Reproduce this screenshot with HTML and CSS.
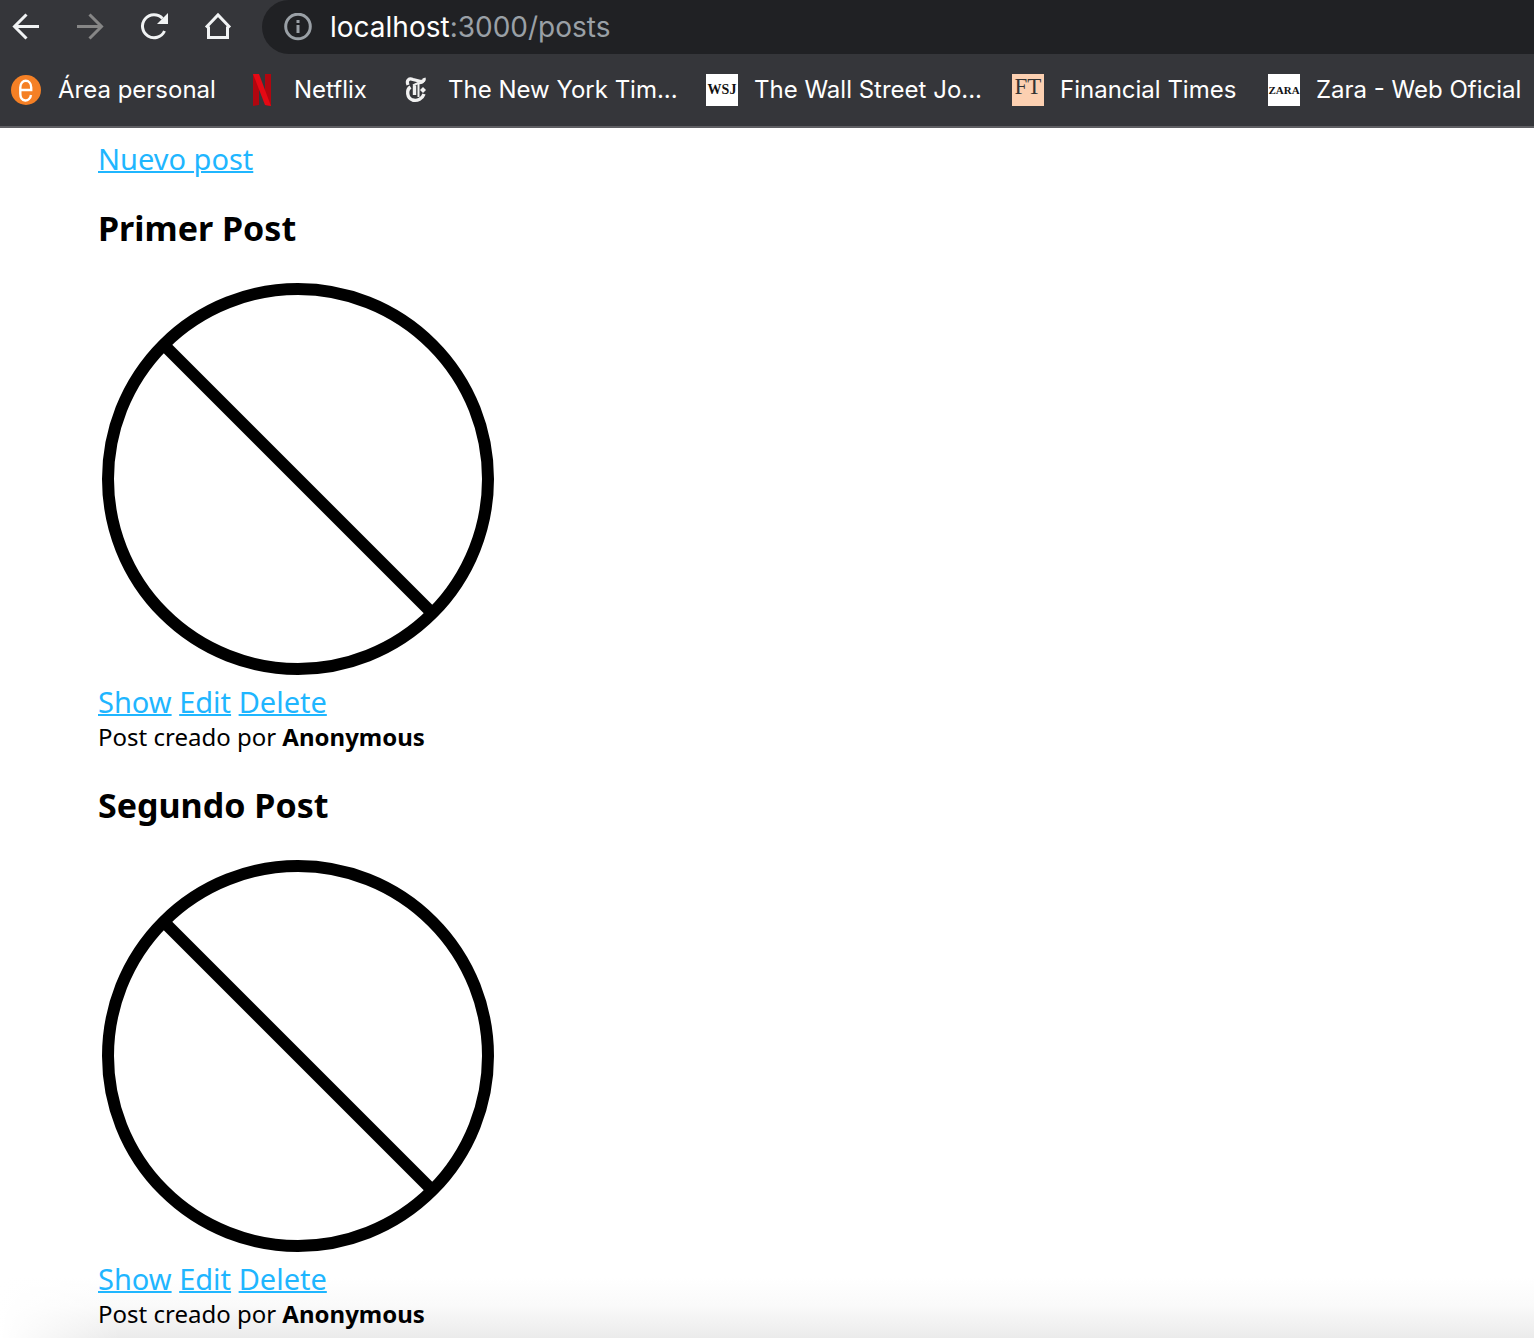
FILE: index.html
```html
<!DOCTYPE html>
<html lang="es">
<head>
<meta charset="utf-8">
<title>Posts</title>
<link rel="stylesheet" href="styles.css">
</head>
<body>
<header class="chrome">
  <div class="toolbar">
    <button class="nav" type="button" aria-label="Back"><svg class="icon" viewBox="0 0 32 32"><path d="M29 15.500H5M16.500 3.500 4.500 15.500l12 12"/></svg></button>
    <button class="nav nav-off" type="button" aria-label="Forward"><svg class="icon" viewBox="0 0 32 32"><path d="M3 15.500h24M15.500 3.500l12 12-12 12"/></svg></button>
    <button class="nav" type="button" aria-label="Reload"><svg class="icon" viewBox="0 0 32 32"><path d="M26.500 20A11.500 11.500 0 1 1 24.500 7.500"/><path class="solid" d="M30 2v11H19z"/></svg></button>
    <button class="nav" type="button" aria-label="Home"><svg class="icon" viewBox="0 0 32 32"><path d="M4 16.500 16 4l12 12.500M6.500 15.500v11h19v-11"/></svg></button>
    <div class="address">
      <svg class="info" viewBox="0 0 28 28"><circle cx="14" cy="13.500" r="12.300"/><path d="M14 12v8M14 7v3"/></svg>
      <span class="url"><span class="host">localhost</span>:3000/posts</span>
    </div>
  </div>
  <nav class="bookmarks" aria-label="Bookmarks">
    <a class="bookmark" href="#"><svg class="favicon" viewBox="0 0 32 32"><circle cx="16" cy="16" r="15" fill="#f58025"/><path d="M10.300 16H21.200v-2.500c0-9-10.900-9-10.900 0v6c0 9 9.500 9 10.700 1.500" fill="none" stroke="#fff" stroke-width="2.400"/></svg><span>Área personal</span></a>
    <a class="bookmark" href="#"><svg class="favicon" viewBox="0 0 32 32"><path d="M7 0h6v31l-6 1zM19 0h6v32l-6-1z" fill="#b1060f"/><path d="M7 0h6l12 32-6-1z" fill="#e50914"/></svg><span>Netflix</span></a>
    <a class="bookmark" href="#"><svg class="favicon" viewBox="0 0 32 32"><g fill="none" stroke="#f1f1f1"><path d="M8 11C6 6 9 4 13 5.500l6 1.500c3 .9 6-.3 5-3" stroke-width="3.200"/><path d="M10.500 13c-4.500 3-3.500 11 2 13 5 1.500 10-1.500 11.500-6" stroke-width="3.400"/><path d="M14.500 11.500V21" stroke-width="3.400"/><path d="M18.500 9.500V23M13 11.500l5-2.500c3 .5 5-.5 6-2.500" stroke-width="2"/><path d="m23 13 3 3-3 3-3-3z" fill="#f1f1f1" stroke="none"/></g></svg><span>The New York Tim...</span></a>
    <a class="bookmark" href="#"><span class="favicon tile tile-wsj">WSJ</span><span>The Wall Street Jo...</span></a>
    <a class="bookmark" href="#"><span class="favicon tile tile-ft">FT</span><span>Financial Times</span></a>
    <a class="bookmark" href="#"><span class="favicon tile tile-zara">ZARA</span><span>Zara - Web Oficial</span></a>
  </nav>
</header>
<main class="page">
  <a class="link" href="#">Nuevo post</a>
  <article class="post">
    <h2 class="title">Primer Post</h2>
    <svg class="picture" viewBox="0 0 400 400" role="img" aria-label="Sin imagen"><circle cx="200" cy="200" r="190"/><path d="m66 66 268 268"/></svg>
    <div class="actions"><a class="link" href="#">Show</a> <a class="link" href="#">Edit</a> <a class="link" href="#">Delete</a></div>
    <p class="author">Post creado por <strong>Anonymous</strong></p>
  </article>
  <article class="post">
    <h2 class="title">Segundo Post</h2>
    <svg class="picture" viewBox="0 0 400 400" role="img" aria-label="Sin imagen"><circle cx="200" cy="200" r="190"/><path d="m66 66 268 268"/></svg>
    <div class="actions"><a class="link" href="#">Show</a> <a class="link" href="#">Edit</a> <a class="link" href="#">Delete</a></div>
    <p class="author">Post creado por <strong>Anonymous</strong></p>
  </article>
</main>
</body>
</html>
```
FILE: styles.css
```css
* { box-sizing: border-box; }

body {
  margin: 0;
  min-height: 100vh;
  display: flex;
  flex-direction: column;
  background: #fff;
  color: #000;
  font-family: "Noto Sans", "Open Sans", sans-serif;
}

/* Browser bars */
.chrome {
  background: #35363a;
  border-bottom: 2px solid #5f5f63;
  color: #fff;
  font-family: Inter, "Liberation Sans", sans-serif;
}

.toolbar {
  display: flex;
  align-items: center;
  gap: 32px;
  height: 54px;
  padding-left: 10px;
}

.nav {
  width: 32px;
  height: 32px;
  padding: 0;
  border: 0;
  background: none;
  color: #f1f3f4;
}

.nav-off { color: #868686; }

.icon {
  display: block;
  width: 32px;
  height: 32px;
  fill: none;
  stroke: currentColor;
  stroke-width: 3;
}

.icon .solid { fill: currentColor; stroke: none; }

.address {
  flex: 1;
  align-self: stretch;
  display: flex;
  align-items: center;
  gap: 18px;
  padding-left: 22px;
  margin-left: -4px;
  border-radius: 28px 0 0 28px;
  background: #202124;
}

.info {
  width: 28px;
  height: 28px;
  fill: none;
  stroke: #9aa0a6;
  stroke-width: 3;
}

.url { color: #9aa0a6; font-size: 28px; line-height: 32px; }
.host { color: #fff; }

.bookmarks {
  display: grid;
  grid-template-columns: 236px 154px 306px 306px 256px auto;
  height: 72px;
  align-items: center;
  padding-left: 10px;
  overflow: hidden;
  font-size: 24px;
  line-height: 32px;
  white-space: nowrap;
}

.bookmark {
  display: flex;
  gap: 16px;
  color: #fff;
  text-decoration: none;
}

.favicon { flex: none; width: 32px; height: 32px; }

.tile {
  display: flex;
  justify-content: center;
  background: #fff;
  color: #111;
  font-family: "Liberation Serif", serif;
}

.tile-wsj { font-size: 14px; font-weight: bold; }
.tile-ft { background: #fcd0b1; color: #333; font-size: 23px; line-height: 25px; }
.tile-zara { font-size: 11px; font-weight: bold; }

/* Posts */
.page {
  flex: 1;
  padding: 12px 98px 6px;
  background:
    linear-gradient(to right, #fff, transparent) left bottom / 120px 60px no-repeat,
    linear-gradient(#fff, #fafafa 45%, #ebebeb) left bottom / 100% 60px no-repeat;
}

.link {
  color: #1fb6ff;
  font-size: 29px;
  line-height: 38px;
  text-decoration-thickness: 2px;
}

.page > .link { display: block; width: max-content; }

.post { padding-bottom: 2px; }

.title {
  margin: 30px 0 31px;
  font-size: 34px;
  line-height: 40px;
}

.picture {
  display: block;
  width: 400px;
  height: 400px;
  fill: none;
  stroke: #000;
  stroke-width: 12;
}

.actions {
  margin-top: 4px;
  font-size: 29px;
  line-height: 38px;
}

.author {
  margin: 0;
  font-size: 24px;
  line-height: 32px;
}
```
